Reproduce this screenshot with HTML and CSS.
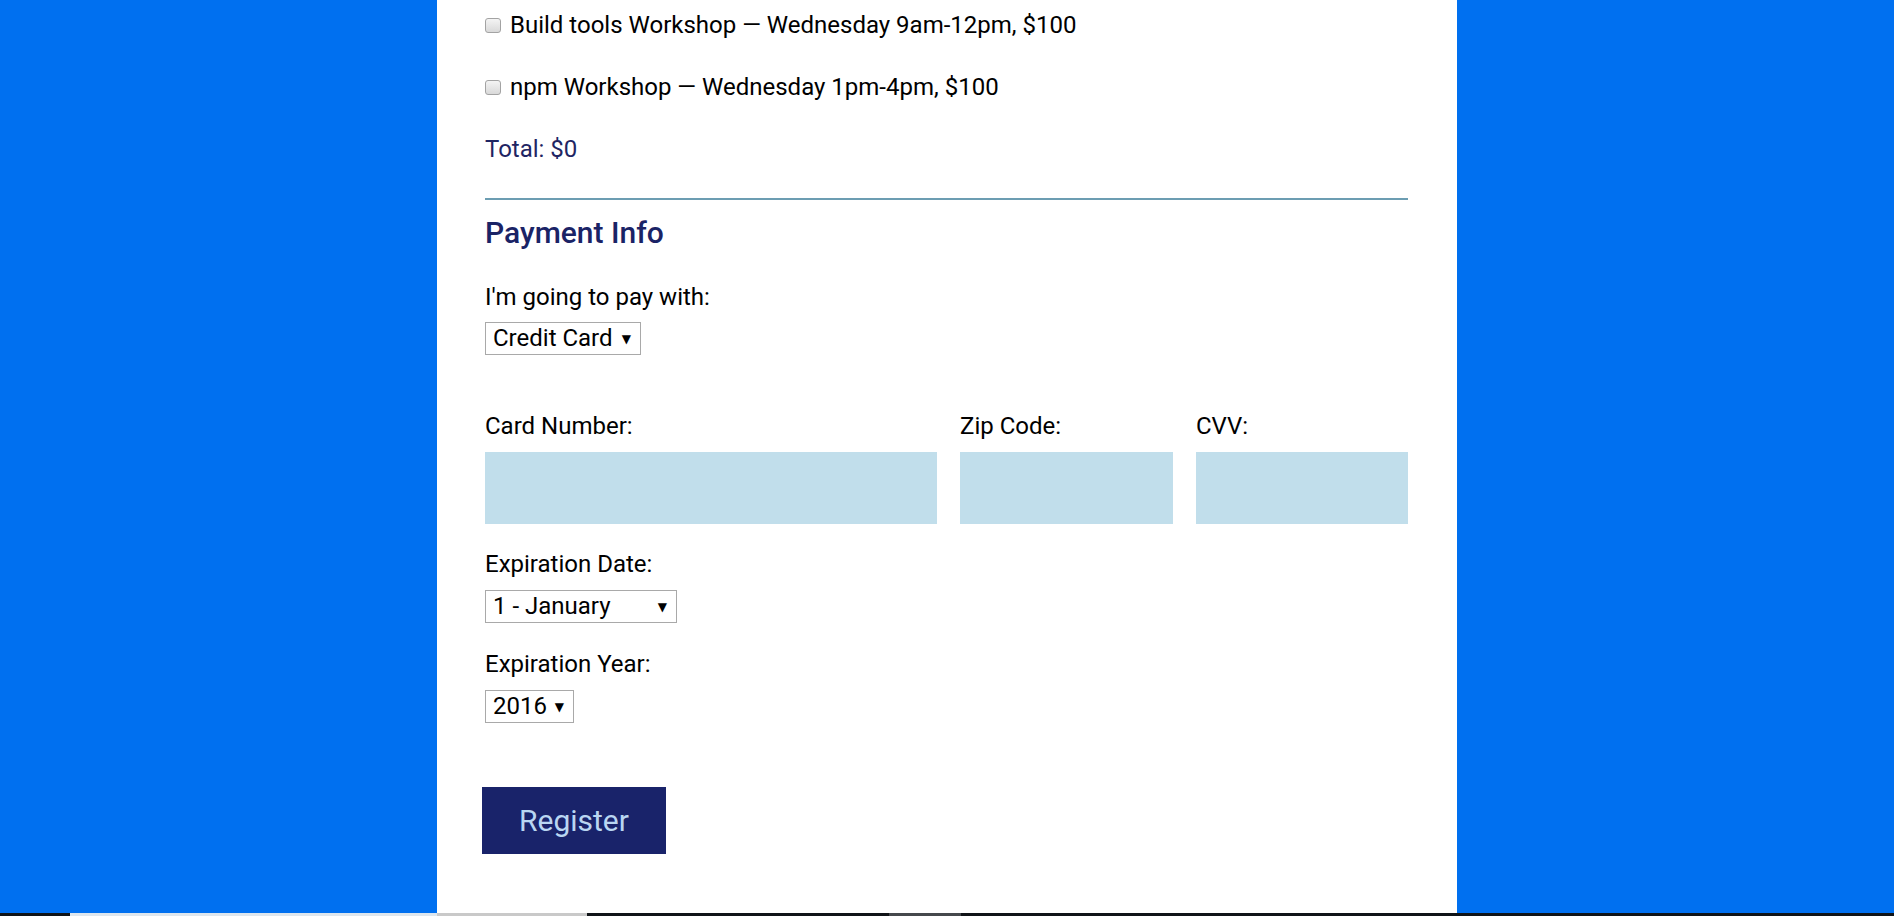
FILE: index.html
```html
<!DOCTYPE html>
<html lang="en">
<head>
<meta charset="utf-8">
<title>Registration</title>
<link rel="stylesheet" href="styles.css">
</head>
<body>
<div class="container">
  <form class="form">
    <div class="activities">
      <label class="activity"><input class="checkbox" type="checkbox" name="build-tools">Build tools Workshop — Wednesday 9am-12pm, $100</label>
      <label class="activity"><input class="checkbox" type="checkbox" name="npm">npm Workshop — Wednesday 1pm-4pm, $100</label>
      <p class="total">Total: $0</p>
    </div>
    <div class="divider"></div>
    <div class="payment">
      <h2 class="section-title">Payment Info</h2>
      <label class="field-label" for="payment">I'm going to pay with:</label>
      <div class="select-wrap sel-payment first">
        <select id="payment"><option>Credit Card</option><option>PayPal</option><option>Bitcoin</option></select>
      </div>
      <div class="card-row">
        <div class="card-col">
          <label class="field-label" for="cc-num">Card Number:</label>
          <input class="text-input" id="cc-num" type="text">
        </div>
        <div class="card-col">
          <label class="field-label" for="zip">Zip Code:</label>
          <input class="text-input" id="zip" type="text">
        </div>
        <div class="card-col">
          <label class="field-label" for="cvv">CVV:</label>
          <input class="text-input" id="cvv" type="text">
        </div>
      </div>
      <label class="field-label exp-label" for="exp-month">Expiration Date:</label>
      <div class="select-wrap sel-month">
        <select id="exp-month"><option>1 - January</option><option>2 - February</option></select>
      </div>
      <label class="field-label exp-label year" for="exp-year">Expiration Year:</label>
      <div class="select-wrap sel-year">
        <select id="exp-year"><option>2016</option><option>2017</option></select>
      </div>
    </div>
    <button class="register" type="submit">Register</button>
  </form>
</div>
<div class="taskbar">
  <span class="seg seg-dark1"></span>
  <span class="seg seg-light1"></span>
  <span class="seg seg-light2"></span>
  <span class="seg seg-dark2"></span>
  <span class="seg seg-grey"></span>
  <span class="seg seg-dark3"></span>
</div>
</body>
</html>
```

FILE: styles.css
```css
html, body {
  margin: 0;
  height: 100%;
}

body {
  background: #0070f0;
  font-family: Roboto, "Liberation Sans", sans-serif;
  font-size: 24px;
  color: #000;
}

.container {
  width: 1020px;
  min-height: 100%;
  margin: 0 auto;
  box-sizing: border-box;
  padding: 11px 49px 60px 48px;
  background: #fff;
}

.activity {
  display: flex;
  align-items: center;
  height: 28px;
  line-height: 28px;
  margin-bottom: 34px;
}

.checkbox {
  appearance: none;
  -webkit-appearance: none;
  box-sizing: border-box;
  width: 16px;
  height: 15px;
  margin: 0 9px 0 0;
  border: 1px solid #a3a3a3;
  border-radius: 3px;
  background: linear-gradient(#f4f4f4, #d9d9d9);
  flex: none;
}

.total {
  margin: 0;
  line-height: 28px;
  color: #1f2563;
}

.divider {
  height: 2px;
  background: #6c9db2;
  margin: 35px 0 16px;
}

.section-title {
  margin: 0 0 33px;
  font-size: 30px;
  font-weight: 500;
  line-height: 34px;
  color: #1a2366;
}

.field-label {
  display: block;
  line-height: 28px;
}

.select-wrap {
  position: relative;
  width: fit-content;
  margin-top: 12px;
}

.select-wrap.first {
  margin-top: 11px;
}

.select-wrap select {
  appearance: none;
  -webkit-appearance: none;
  display: block;
  box-sizing: border-box;
  height: 33px;
  padding: 0 0 0 7px;
  border: 1px solid #a9a9a9;
  border-radius: 0;
  background: #fff;
  color: #000;
  font-family: Roboto, "Liberation Sans", sans-serif;
  font-size: 24px;
  line-height: 31px;
}

.select-wrap::after {
  content: "\25BC";
  position: absolute;
  right: 10px;
  top: 50%;
  transform: translateY(-50%);
  font-family: "DejaVu Sans", sans-serif;
  font-size: 12px;
  line-height: 1;
  color: #000;
  pointer-events: none;
}

.sel-payment select { width: 156px; }
.sel-month select { width: 192px; }
.sel-year select { width: 89px; }

.card-row {
  display: grid;
  grid-template-columns: 452px 213px 212px;
  column-gap: 23px;
  margin-top: 57px;
}

.card-col .field-label {
  margin-bottom: 12px;
}

.text-input {
  display: block;
  box-sizing: border-box;
  width: 100%;
  height: 72px;
  border: 0;
  background: #c1deeb;
  color: #184f68;
  font: inherit;
}

.exp-label {
  margin-top: 26px;
}

.exp-label.year {
  margin-top: 27px;
}

.register {
  display: block;
  box-sizing: border-box;
  width: 184px;
  height: 67px;
  margin: 64px 0 0 -3px;
  border: 0;
  background: #19236a;
  color: #b9d6f2;
  font-family: Roboto, "Liberation Sans", sans-serif;
  font-size: 30px;
  cursor: pointer;
}

.taskbar {
  position: fixed;
  left: 0;
  right: 0;
  bottom: 0;
  height: 3px;
  display: flex;
}

.seg { display: block; height: 100%; }
.seg-dark1 { width: 70px; background: #101418; }
.seg-light1 { width: 367px; background: #dde6ee; }
.seg-light2 { width: 150px; background: #c9c9c9; }
.seg-dark2 { width: 302px; background: #101418; }
.seg-grey { width: 72px; background: #45484c; }
.seg-dark3 { flex: 1; background: #101418; }
```
